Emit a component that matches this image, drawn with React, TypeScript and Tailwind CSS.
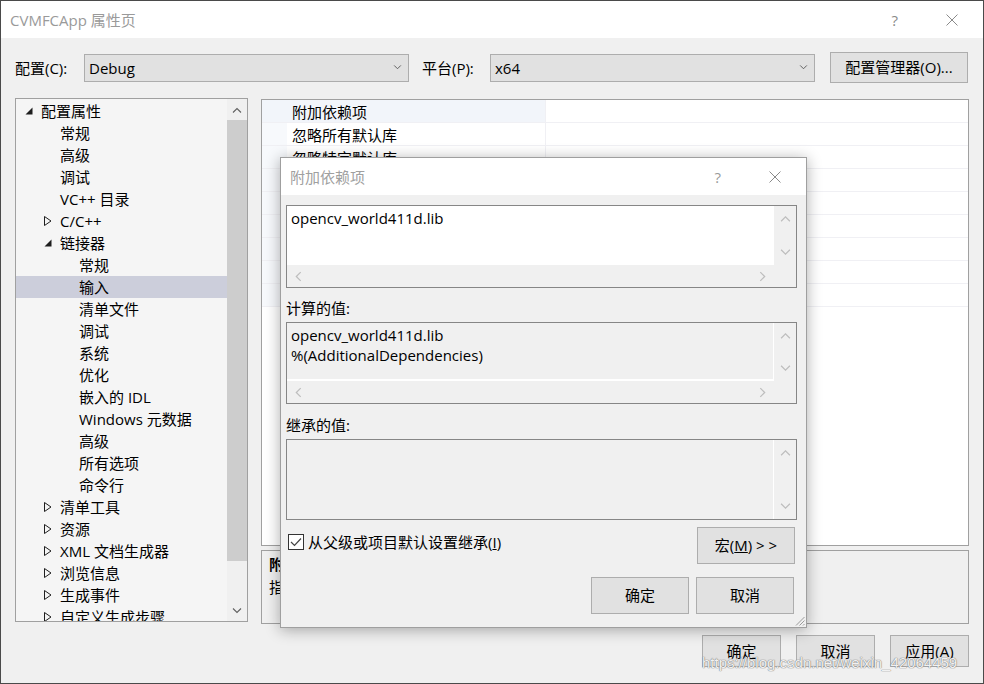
import React from "react";

type Dir = "up" | "down" | "left" | "right";

function Chev({ dir, color, w = 9 }: { dir: Dir; color: string; w?: number }) {
  const vertical = dir === "up" || dir === "down";
  const vw = vertical ? 10 : 6;
  const vh = vertical ? 6 : 10;
  const d =
    dir === "up"
      ? "M1 5.5 L5 1.5 L9 5.5"
      : dir === "down"
      ? "M1 0.5 L5 4.5 L9 0.5"
      : dir === "left"
      ? "M5 1 L1 5 L5 9"
      : "M1 1 L5 5 L1 9";
  const width = vertical ? w : Math.round((w * 6) / 10);
  const height = vertical ? Math.round((w * 6) / 10) : w;
  return (
    <svg width={width} height={height} viewBox={`0 0 ${vw} ${vh}`} fill="none">
      <path d={d} stroke={color} strokeWidth="1.1" />
    </svg>
  );
}

function CloseX({ color }: { color: string }) {
  return (
    <svg width="12" height="12" viewBox="0 0 12 12" fill="none">
      <path d="M0.5 0.5 L11.5 11.5 M11.5 0.5 L0.5 11.5" stroke={color} strokeWidth="1" />
    </svg>
  );
}

type TreeItem = { t: string; l: 0 | 1 | 2; a?: "open" | "closed"; sel?: boolean };

const tree: TreeItem[] = [
  { t: "配置属性", l: 0, a: "open" },
  { t: "常规", l: 1 },
  { t: "高级", l: 1 },
  { t: "调试", l: 1 },
  { t: "VC++ 目录", l: 1 },
  { t: "C/C++", l: 1, a: "closed" },
  { t: "链接器", l: 1, a: "open" },
  { t: "常规", l: 2 },
  { t: "输入", l: 2, sel: true },
  { t: "清单文件", l: 2 },
  { t: "调试", l: 2 },
  { t: "系统", l: 2 },
  { t: "优化", l: 2 },
  { t: "嵌入的 IDL", l: 2 },
  { t: "Windows 元数据", l: 2 },
  { t: "高级", l: 2 },
  { t: "所有选项", l: 2 },
  { t: "命令行", l: 2 },
  { t: "清单工具", l: 1, a: "closed" },
  { t: "资源", l: 1, a: "closed" },
  { t: "XML 文档生成器", l: 1, a: "closed" },
  { t: "浏览信息", l: 1, a: "closed" },
  { t: "生成事件", l: 1, a: "closed" },
  { t: "自定义生成步骤", l: 1, a: "closed" },
];

const props = [
  "附加依赖项",
  "忽略所有默认库",
  "忽略特定默认库",
  "模块定义文件",
  "将模块添加到程序集",
  "嵌入托管资源文件",
  "强制符号引用",
  "延迟加载的 DLL",
  "程序集链接资源",
];

function Arrow({ a }: { a?: "open" | "closed" }) {
  if (a === "open")
    return (
      <svg width="8" height="8" viewBox="0 0 8 8">
        <path d="M7.5 0.5 L7.5 7.5 L0.5 7.5 Z" fill="#1e1e1e" />
      </svg>
    );
  if (a === "closed")
    return (
      <svg width="8" height="10" viewBox="0 0 8 10" fill="none">
        <path d="M0.5 0.5 L7 5 L0.5 9.5 Z" stroke="#1e1e1e" strokeWidth="1" />
      </svg>
    );
  return null;
}

function WinButton({ children, className }: { children: React.ReactNode; className: string }) {
  return (
    <div
      className={
        "flex items-center justify-center border border-[#adadad] bg-[#e1e1e1] text-[15px] text-black " +
        className
      }
    >
      {children}
    </div>
  );
}

function VScroll({ top, bottom }: { top: string; bottom: string }) {
  return (
    <div className={"flex w-[22px] flex-col items-center justify-between bg-[#f0f0f0] " + top + " " + bottom}>
      <Chev dir="up" color="#bdbdbd" w={11} />
      <Chev dir="down" color="#bdbdbd" w={11} />
    </div>
  );
}

export default function App() {
  return (
    <div className="relative h-[684px] w-[984px] overflow-hidden border border-[#4a4a4a] bg-[#f0f0f0] font-['Open_Sans','Noto_Sans_CJK_SC',sans-serif] text-black">
      {/* Title bar */}
      <div className="flex h-[37px] items-center bg-white pl-[9px] pr-[25px]">
        <div className="flex-1 text-[15px] leading-[20px] text-[#9a9a9a]">CVMFCApp 属性页</div>
        <div className="mr-[48px] text-[15px] leading-[20px] text-[#8a8a8a]">?</div>
        <CloseX color="#8a8a8a" />
      </div>

      {/* Config row */}
      <div className="mt-[14px] flex h-[31px] items-center pl-[14px]">
        <div className="w-[69px] text-[15px] leading-[20px]">配置(C):</div>
        <div className="flex h-[28px] w-[325px] items-center justify-between border border-[#adadad] bg-[#e1e1e1] pl-[4px] pr-[6px]">
          <span className="text-[15px] leading-[20px]">Debug</span>
          <Chev dir="down" color="#555555" w={9} />
        </div>
        <div className="ml-[13px] w-[68px] text-[15px] leading-[20px]">平台(P):</div>
        <div className="flex h-[28px] w-[325px] items-center justify-between border border-[#adadad] bg-[#e1e1e1] pl-[4px] pr-[6px]">
          <span className="text-[15px] leading-[20px]">x64</span>
          <Chev dir="down" color="#555555" w={9} />
        </div>
        <WinButton className="ml-[15px] h-[31px] w-[138px]">配置管理器(O)...</WinButton>
      </div>

      {/* Main content */}
      <div className="mt-[15px] flex h-[526px] pl-[14px] pr-[14px]">
        {/* Tree */}
        <div className="flex h-[524px] w-[233px] border border-[#a0a0a0] bg-[#f5f5f5]">
          <div className="flex-1 overflow-hidden pt-[1px]">
            {tree.map((it, i) => (
              <div
                key={i}
                className={
                  "flex h-[22px] items-center text-[15px] leading-[20px] " +
                  (it.sel ? "bg-[#cccedb] " : "") +
                  (it.l === 0 ? "pl-[9px]" : it.l === 1 ? "pl-[28px]" : "pl-[47px]")
                }
              >
                <div className="flex w-[16px] items-center">
                  <Arrow a={it.a} />
                </div>
                <span className="whitespace-nowrap">{it.t}</span>
              </div>
            ))}
          </div>
          <div className="flex w-[20px] flex-col bg-[#f0f0f0]">
            <div className="flex h-[21px] items-center justify-center">
              <Chev dir="up" color="#606060" w={10} />
            </div>
            <div className="h-[441px] bg-[#cdcdcd]" />
            <div className="flex-1" />
            <div className="flex h-[21px] items-center justify-center">
              <Chev dir="down" color="#606060" w={10} />
            </div>
          </div>
        </div>

        {/* Right column */}
        <div className="ml-[13px] flex flex-1 flex-col">
          <div className="mt-[1px] h-[447px] overflow-hidden border border-[#a0a0a0] bg-white">
            {props.map((p, i) => (
              <div key={i} className="flex h-[23px] border-b border-[#f0f0f4]">
                <div className={"w-[25px] " + (i === 0 ? "bg-[#f2f5fa]" : "bg-[#f7f9fc]")} />
                <div
                  className={
                    "flex w-[258px] items-center pl-[5px] pt-[1px] text-[15px] leading-[20px] " +
                    (i === 0 ? "bg-[#f2f5fa]" : "bg-white")
                  }
                >
                  {p}
                </div>
                <div className="flex-1 border-l border-[#f0f0f4]" />
              </div>
            ))}
          </div>
          <div className="mt-[4px] h-[74px] border border-[#a0a0a0] bg-[#f0f0f0] pl-[7px] pt-[3px]">
            <div className="text-[15px] font-bold leading-[20px]">附加依赖项</div>
            <div className="mt-[3px] text-[15px] leading-[20px]">
              指定要添加到链接命令行的附加项。[例如 kernel32.lib]
            </div>
          </div>
        </div>
      </div>

      {/* Bottom buttons */}
      <div className="mt-[11px] flex justify-end gap-[15px] pr-[14px]">
        <WinButton className="h-[32px] w-[79px]">确定</WinButton>
        <WinButton className="h-[32px] w-[79px]">取消</WinButton>
        <WinButton className="h-[32px] w-[79px]">应用(A)</WinButton>
      </div>

      {/* Watermark */}
      <div className="absolute left-[701px] top-[652px] whitespace-nowrap font-['Liberation_Sans',sans-serif] text-[15px] leading-[20px] text-white/90 [text-shadow:0_0_1px_#6f6f6f,0_0_1px_#6f6f6f]">
        https://blog.csdn.net/weixin_42064459
      </div>

      {/* Modal dialog */}
      <div className="absolute left-[279px] top-[156px] flex h-[471px] w-[527px] flex-col border border-[#9f9f9f] bg-[#f0f0f0] shadow-[0_2px_14px_rgba(0,0,0,0.32)]">
        <div className="flex h-[37px] items-center bg-white pl-[9px] pr-[25px]">
          <div className="flex-1 text-[15px] leading-[20px] text-[#a0a0a0]">附加依赖项</div>
          <div className="mr-[48px] text-[15px] leading-[20px] text-[#9a9a9a]">?</div>
          <CloseX color="#8a8a8a" />
        </div>

        <div className="relative flex flex-1 flex-col pl-[5px]">
          {/* Textbox 1 */}
          <div className="mt-[10px] flex h-[83px] w-[511px] flex-col border border-[#868686]">
            <div className="flex flex-1">
              <div className="flex-1 bg-white pl-[4px] pt-[2px] text-[15px] leading-[20px]">opencv_world411d.lib</div>
              <VScroll top="pt-[9px]" bottom="pb-[9px]" />
            </div>
            <div className="flex h-[22px] items-center justify-between bg-[#f0f0f0] pl-[8px] pr-[30px]">
              <Chev dir="left" color="#bdbdbd" w={11} />
              <Chev dir="right" color="#bdbdbd" w={11} />
            </div>
          </div>

          <div className="mt-[10px] text-[15px] leading-[20px]">计算的值:</div>

          {/* Textbox 2 */}
          <div className="mt-[4px] flex h-[82px] w-[511px] flex-col border border-[#868686]">
            <div className="flex flex-1">
              <div className="flex-1 border-b-2 border-r border-white bg-[#f0f0f0] pl-[4px] pt-[2px] text-[15px] leading-[20px]">
                <div>opencv_world411d.lib</div>
                <div>%(AdditionalDependencies)</div>
              </div>
              <VScroll top="pt-[9px]" bottom="pb-[9px]" />
            </div>
            <div className="flex h-[22px] items-center justify-between bg-[#f0f0f0] pl-[8px] pr-[30px]">
              <Chev dir="left" color="#bdbdbd" w={11} />
              <Chev dir="right" color="#bdbdbd" w={11} />
            </div>
          </div>

          <div className="mt-[11px] text-[15px] leading-[20px]">继承的值:</div>

          {/* Textbox 3 */}
          <div className="mt-[4px] flex h-[81px] w-[511px] border border-[#868686]">
            <div className="flex-1 border-r border-white bg-[#f0f0f0]" />
            <VScroll top="pt-[9px]" bottom="pb-[9px]" />
          </div>

          {/* Checkbox + macro */}
          <div className="mt-[7px] flex w-[509px] items-start justify-between pl-[2px]">
            <div className="mt-[5px] flex items-center">
              <div className="flex h-[16px] w-[16px] items-center justify-center border border-[#333333] bg-white">
                <svg width="12" height="10" viewBox="0 0 12 10" fill="none">
                  <path d="M1 5 L4.5 8.5 L11 1.5" stroke="#444444" strokeWidth="1.2" />
                </svg>
              </div>
              <span className="ml-[4px] text-[15px] leading-[20px]">
                从父级或项目默认设置继承(<span className="underline">I</span>)
              </span>
            </div>
            <WinButton className="h-[37px] w-[98px]">
              <span>
                宏(<span className="underline">M</span>) &gt; &gt;
              </span>
            </WinButton>
          </div>

          <div className="mt-[13px] flex w-[508px] justify-end gap-[7px]">
            <WinButton className="h-[37px] w-[98px]">确定</WinButton>
            <WinButton className="h-[37px] w-[98px]">取消</WinButton>
          </div>

          {/* Resize grip */}
          <svg className="absolute bottom-[1px] right-[1px]" width="11" height="11" viewBox="0 0 11 11" fill="none">
            <path d="M10.5 2 L2 10.5 M10.5 5.5 L5.5 10.5 M10.5 9 L9 10.5" stroke="#9a9a9a" strokeWidth="1" />
          </svg>
        </div>
      </div>
    </div>
  );
}
